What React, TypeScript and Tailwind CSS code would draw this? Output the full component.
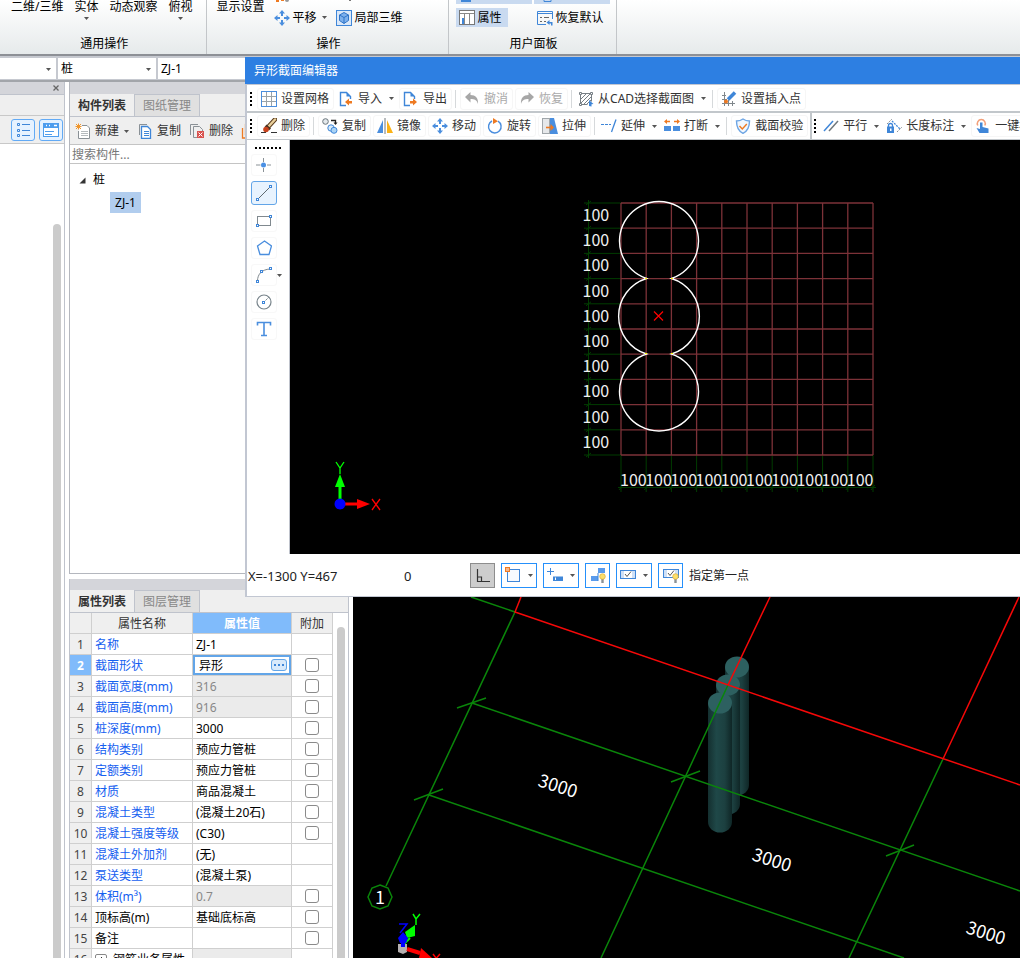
import type { ReactNode } from 'react';

type Children = { children?: ReactNode };

/* ---------- icons ---------- */

function Icon({ children }: Children) {
  return (
    <svg width="16" height="16" viewBox="0 0 16 16" fill="none" className="shrink-0" aria-hidden="true">
      {children}
    </svg>
  );
}

function Caret() {
  return (
    <svg width="5" height="3" viewBox="0 0 5 3" className="shrink-0" aria-hidden="true">
      <path d="M0 0h5L2.5 3z" fill="#555" />
    </svg>
  );
}

const PanIcon = () => (
  <Icon>
    <path d="M8 0l3 3.5H9V6H7V3.5H5zM8 16l3-3.5H9V10H7v2.500H5zM0 8l3.500-3v2H6v2H3.500v2zM16 8l-3.500-3v2H10v2h2.500v2z" fill="#4a8ede" />
  </Icon>
);

const CubeIcon = () => (
  <Icon>
    <rect x="0.5" y="0.5" width="15" height="15" fill="#dbe8f8" stroke="#3f86d8" />
    <path d="M8 2.5l4.5 2.500v5.500L8 13.500l-4.500-3V5z" fill="#7db0ec" stroke="#2f74c8" />
    <path d="M3.500 5L8 7.500 12.500 5M8 7.500v6" stroke="#2f74c8" />
  </Icon>
);

const PropsIcon = () => (
  <Icon>
    <rect x="0.5" y="0.5" width="15" height="14" fill="#fff" stroke="#777" />
    <path d="M1 3.500h14M5.500 4v10M10.500 4v10" stroke="#888" />
    <rect x="3" y="8" width="2" height="6" fill="#3f86d8" />
  </Icon>
);

const ResetIcon = () => (
  <Icon>
    <path d="M9 14.500H0.500v-13h15V9" stroke="#3f86d8" />
    <path d="M1 3.500h14" stroke="#3f86d8" />
    <path d="M3 7.500h2M7 7.500h5M3 11.500h2M7 11.500h2" stroke="#666" />
    <path d="M9.500 12.500l3-2.500v2h3v3.500h-1.500V13.500h-1.500v1.500z" fill="#3f86d8" />
  </Icon>
);

const GridIcon = () => (
  <Icon>
    <path d="M5.500 1v14M10.500 1v14M1 5.500h14M1 10.500h14" stroke="#9aa3a8" />
    <rect x="0.5" y="0.5" width="15" height="15" stroke="#4a8ede" />
  </Icon>
);

const ImportIcon = () => (
  <Icon>
    <path d="M8 14.500H2.500v-13h6l4 4V8" stroke="#3f86d8" strokeWidth="1.4" />
    <path d="M8.500 1.500v4h4" fill="#3f86d8" />
    <path d="M7 11l4-3.500V10h3v2.500h-3v2z" fill="#ee7a22" />
  </Icon>
);

const ExportIcon = () => (
  <Icon>
    <path d="M7 14.500H1.500v-13h6l4 4V8" stroke="#3f86d8" strokeWidth="1.4" />
    <path d="M7.500 1.500v4h4" fill="#3f86d8" />
    <path d="M14 11l-4-3.500V10H7v2.500h3v2z" fill="#ee7a22" />
  </Icon>
);

const UndoIcon = () => (
  <Icon>
    <path d="M1 6l5.500-5v3c5 0 8 3 7.500 9-1-4-3.500-5-7.500-5v3.500z" fill="#a7a7a7" />
  </Icon>
);

const RedoIcon = () => (
  <Icon>
    <path d="M15 6L9.500 1v3c-5 0-8 3-7.500 9 1-4 3.500-5 7.500-5v3.500z" fill="#a7a7a7" />
  </Icon>
);

const HatchIcon = () => (
  <Icon>
    <path d="M2.500 2.500h11v8M2.500 2.500v11h7" stroke="#777f85" />
    <path d="M3 8l5-5M3 12l9-9M5 14l8-8M9 13l4-4" stroke="#777f85" />
    <path d="M1.500 1.500h2v2h-2zM12.500 1.500h2v2h-2zM1.500 12.500h2v2h-2z" fill="#fff" stroke="#777f85" />
    <path d="M11 9l4.500 4-2 .2V15.500L11 15z" fill="#3f86d8" />
  </Icon>
);

const InsertPointIcon = () => (
  <Icon>
    <path d="M3.500 1v14M1 12.500h13M7.500 9v6M11.500 10v5M1 8.500h5M1 4.500h4" stroke="#80878c" />
    <path d="M14 1.500l-7 7" stroke="#3f86d8" strokeWidth="3.500" />
    <circle cx="5" cy="10.5" r="2" fill="#ee7a22" />
  </Icon>
);

const BrushIcon = () => (
  <Icon>
    <path d="M0 14.500h5M10 14.500h6" stroke="#333" />
    <path d="M8 8l6-6.500" stroke="#5b3d1e" strokeWidth="4.5" strokeLinecap="round" />
    <path d="M8 8l6-6.500" stroke="#e9cf9a" strokeWidth="2.5" strokeLinecap="round" />
    <path d="M5.500 6.500l4.500 4-2 2-4.500-3.500z" fill="#4a3220" />
    <circle cx="5" cy="11.5" r="2.8" fill="#c8421c" />
  </Icon>
);

const CopyCirclesIcon = () => (
  <Icon>
    <circle cx="3.5" cy="3.5" r="2.8" fill="#e4e9ec" stroke="#69747b" />
    <path d="M9 2.500h4.500v3" stroke="#222" strokeWidth="1.3" />
    <path d="M11.500 4.500h4L13.500 7z" fill="#222" />
    <circle cx="9" cy="10" r="3.2" fill="#d6eaf8" stroke="#3f86d8" />
    <circle cx="12" cy="12.3" r="3" fill="#a9d3f5" stroke="#3f86d8" />
  </Icon>
);

const MirrorIcon = () => (
  <Icon>
    <path d="M6 2v13H0z" fill="#4a8ede" />
    <path d="M10 2v13h6z" fill="#fbb216" />
    <path d="M8 0v16" stroke="#70787d" />
  </Icon>
);

const RotateIcon = () => (
  <Icon>
    <path d="M5 3a6.300 6.300 0 1 0 6 .2" stroke="#4a8ede" strokeWidth="1.4" />
    <path d="M6 0l5 3.200L6 6z" fill="#ee7a22" />
  </Icon>
);

const StretchIcon = () => (
  <Icon>
    <rect x="0.5" y="0.5" width="7" height="15" fill="#e6e8ea" stroke="#a0a6aa" />
    <path d="M8 0h4l4 16H8z" fill="#4a8ede" />
    <path d="M4 9.500h6" stroke="#ee7a22" strokeWidth="1.6" />
    <path d="M8.500 6l3.500 3.500L8.500 13z" fill="#ee7a22" />
  </Icon>
);

const ExtendIcon = () => (
  <Icon>
    <path d="M0 6.500h10" stroke="#3f86d8" strokeDasharray="3 1" />
    <path d="M15 1.500L10.500 14" stroke="#3f86d8" strokeWidth="1.3" />
  </Icon>
);

const BreakIcon = () => (
  <Icon>
    <path d="M0 3.500L3 1v5zM16 3.500L13 1v5z" fill="#ee7a22" />
    <path d="M2 3.500h4M10 3.500h4" stroke="#ee7a22" strokeWidth="1.3" />
    <path d="M0 8h7v5H0zM9 8h7v5H9z" fill="#4a8ede" />
  </Icon>
);

const ShieldIcon = () => (
  <Icon>
    <path d="M8 1c2 1.500 4 2 6.500 2 0 6-1.500 10-6.500 12.300C3 13 1.500 9 1.500 3 4 3 6 2.500 8 1z" fill="#f1f7fe" stroke="#6da5e4" strokeWidth="1.4" />
    <path d="M4.500 8l2.800 3 4.500-5" stroke="#ee7a22" strokeWidth="1.4" />
  </Icon>
);

const ParallelIcon = () => (
  <Icon>
    <path d="M1 13L10 3" stroke="#3f86d8" strokeWidth="1.5" />
    <path d="M6 13l9-10" stroke="#70787d" strokeWidth="1.5" />
  </Icon>
);

const LengthIcon = () => (
  <Icon>
    <path d="M1 6L6 1M11 14l5-5" stroke="#8a9196" strokeDasharray="2 1" />
    <path d="M6 3l8 8" stroke="#3f86d8" strokeDasharray="2 1" strokeWidth="1.3" />
    <path d="M2.500 9V7.500a1.500 1.500 0 0 1 4 0V9" stroke="#3f86d8" strokeWidth="1.3" />
    <rect x="1" y="8.5" width="7" height="6.5" fill="#3f86d8" />
    <rect x="4" y="10.5" width="1.5" height="2.5" fill="#fff" />
  </Icon>
);

const TouchIcon = () => (
  <Icon>
    <path d="M2.800 7.500a4 4 0 1 1 7 0" stroke="#f2a07a" strokeWidth="1.5" />
    <path d="M5 4.500h2.500V9l6 1.500V15H4.500l-3-5L5 11z" fill="#3f86d8" />
  </Icon>
);

const NewDocIcon = () => (
  <Icon>
    <path d="M7 2.500h5l2.500 2.500v10.500h-11V8" fill="#fff" stroke="#8a9196" />
    <path d="M6 8.500h7M6 10.500h7M6 12.500h7" stroke="#b5babd" />
    <path d="M3.500 0.500v6M0.500 3.500h6M1 1l5 5M6 1L1 6" stroke="#f0952b" />
  </Icon>
);

const CopyDocIcon = () => (
  <Icon>
    <path d="M2.500 12V1.500H10" stroke="#8a9196" />
    <path d="M4.500 3.500h6l3 3v9h-9z" fill="#fff" stroke="#3f86d8" strokeWidth="1.3" />
    <path d="M7 8.500h5M7 10.500h5M7 12.500h5" stroke="#3f86d8" />
  </Icon>
);

const DeleteDocIcon = () => (
  <Icon>
    <path d="M1.500 12V1.500H9" stroke="#8a9196" />
    <path d="M8 14.500H4.500v-11h6l3 3V8" stroke="#8a9196" />
    <rect x="8" y="8" width="7" height="7" fill="#d9534f" />
    <path d="M9.500 9.500l4 4M13.500 9.500l-4 4" stroke="#fff" />
  </Icon>
);

const LayersIcon = () => (
  <Icon>
    <path d="M1.500 5v10H12" stroke="#ee7a22" strokeWidth="1.3" />
    <rect x="4.5" y="1.5" width="10" height="10" stroke="#ee7a22" strokeWidth="1.3" />
  </Icon>
);

const ListViewIcon = () => (
  <Icon>
    <path d="M2.500 1.500h2v2h-2zM2.500 7.500h2v2h-2zM2.500 12.500h2v2h-2z" stroke="#3f86d8" />
    <path d="M7 2.500h8M7 8.500h8M7 13.500h8" stroke="#3f86d8" />
  </Icon>
);

const CardViewIcon = () => (
  <Icon>
    <rect x="0.5" y="1.5" width="15" height="13" fill="#fff" stroke="#4e9dee" />
    <path d="M0 1h16v5H0z" fill="#4e9dee" />
    <path d="M3 3.500h1M6 3.500h1M11 3.500h3" stroke="#fff" strokeWidth="1.5" />
    <path d="M2 9.500h9M2 12.500h7" stroke="#4e9dee" />
  </Icon>
);

const PointIcon = () => (
  <Icon>
    <path d="M7.500 1v4M7.500 11v4M0 8h4.500M11 8h4" stroke="#8a9196" />
    <circle cx="7.5" cy="8" r="2.5" fill="#4a90e4" />
  </Icon>
);

const Handle = ({ x, y }: { x: number; y: number }) => (
  <rect x={x - 1} y={y - 1} width="2" height="2" fill="#fff" stroke="#3f86d8" />
);

const LineIcon = () => (
  <Icon>
    <path d="M2 14L14 2" stroke="#5f6a70" />
    <Handle x={1.5} y={14.5} />
    <Handle x={14.5} y={1.5} />
  </Icon>
);

const RectIcon = () => (
  <Icon>
    <rect x="1.5" y="3.5" width="13" height="9" stroke="#80898f" />
    <Handle x={1.5} y={12.5} />
    <Handle x={14.5} y={3.5} />
  </Icon>
);

const PentagonIcon = () => (
  <Icon>
    <path d="M8.500 1l7 5-2.500 8.500H4L1.500 6z" stroke="#4a8ede" strokeWidth="1.3" />
  </Icon>
);

const ArcIcon = () => (
  <Icon>
    <path d="M1.500 14C1.500 7 6 2.500 14 2" stroke="#80898f" />
    <Handle x={1.5} y={14.5} />
    <Handle x={5.5} y={4.5} />
    <Handle x={14.5} y={1.5} />
  </Icon>
);

const CircleIcon = () => (
  <Icon>
    <circle cx="8" cy="8" r="7" stroke="#77838a" strokeWidth="1.2" />
    <path d="M8 8l5-5" stroke="#77838a" strokeDasharray="2 1" />
    <Handle x={7.5} y={8.5} />
  </Icon>
);

const TextIcon = () => (
  <Icon>
    <path d="M1.500 4.500V1.500h13v3M8 1.500v13M5 14.500h6" stroke="#4a8ede" strokeWidth="1.6" />
  </Icon>
);

const OrthoIcon = () => (
  <Icon>
    <path d="M2.500 2v12.500H15M2.500 10h4v4.500" stroke="#333" strokeWidth="1.2" />
  </Icon>
);

const SquareIcon = () => (
  <Icon>
    <rect x="2.5" y="2.5" width="12" height="12" fill="#f7faff" stroke="#3f86d8" />
    <rect x="0.5" y="0.5" width="4" height="4" fill="#f6b58c" stroke="#ee7a22" />
  </Icon>
);

const DynInputIcon = () => (
  <Icon>
    <path d="M3.500 1v7M0 4.500h7" stroke="#3f86d8" />
    <rect x="6" y="9.5" width="10" height="4.5" fill="#3f86d8" />
    <path d="M8.500 10.500v2.500" stroke="#fff" />
  </Icon>
);

const Bulb = () => (
  <>
    <path d="M12.500 12v4" stroke="#8a9196" strokeWidth="2.4" />
    <circle cx="12.5" cy="9.5" r="2.8" fill="#fbdf6d" stroke="#d9a427" strokeWidth="0.6" />
  </>
);

const BlocksIcon = () => (
  <Icon>
    <path d="M8 1h7v5H8zM1 9h7v5H1z" fill="#5a9bec" />
    <path d="M8 6v8" stroke="#3f86d8" />
    <Bulb />
  </Icon>
);

const CheckBoxIcon = () => (
  <Icon>
    <rect x="0.5" y="3.5" width="15" height="8" fill="#cfe0f6" stroke="#3f86d8" />
    <rect x="4" y="4" width="8" height="7" fill="#fff" />
    <path d="M5 7l2 2.500 4-5" stroke="#555" />
  </Icon>
);

const CheckBulbIcon = () => (
  <Icon>
    <rect x="0.5" y="2.5" width="15" height="8" fill="#cfe0f6" stroke="#3f86d8" />
    <rect x="4" y="3" width="8" height="7" fill="#fff" />
    <path d="M5 6l2 2.500 4-5" stroke="#555" />
    <Bulb />
  </Icon>
);

/* ---------- ribbon ---------- */

function RibbonGroup({ title, children }: { title: string } & Children) {
  return (
    <section className="flex flex-col border-r border-[#c3c6c9]">
      <div className="flex h-[30px] items-start">{children}</div>
      <h2 className="pl-[3px] pt-[6px] text-center leading-4">{title}</h2>
    </section>
  );
}

function Ribbon() {
  return (
    <header className="flex h-[54px] shrink-0 overflow-hidden bg-linear-to-b from-white to-[#e6eaeb]">
      <RibbonGroup title="通用操作">
        <div className="flex items-start gap-[11px] pl-[11px] pr-[13px] leading-[14px]">
          <button>二维/三维</button>
          <button className="flex flex-col items-center gap-[3px]">实体<Caret /></button>
          <button>动态观察</button>
          <button className="flex flex-col items-center gap-[3px]">俯视<Caret /></button>
        </div>
      </RibbonGroup>
      <RibbonGroup title="操作">
        <button className="pl-[10px] pr-[9px] leading-[14px]">显示设置</button>
        <div className="pr-[45px]">
          <svg width="80" height="8" viewBox="0 0 80 8" className="block" aria-hidden="true">
            <path d="M2 0h3v2H2zM7 0h3v1H7z" fill="#ee7a22" />
            <circle cx="13" cy="0" r="2" fill="#999" />
            <path d="M75 0h2v1h-2z" fill="#777" />
          </svg>
          <div className="flex h-[19px] items-center">
            <button className="flex items-center gap-[3px]"><PanIcon />平移</button>
            <span className="pl-[5px] pr-[9px]"><Caret /></span>
            <button className="flex items-center gap-[3px]"><CubeIcon />局部三维</button>
          </div>
        </div>
      </RibbonGroup>
      <RibbonGroup title="用户面板">
        <div className="grid grid-cols-2 gap-x-[2px] gap-y-1 pl-[7px] pr-[6px]">
          <div className="h-1 w-[76px] bg-[#c9daf0]"><svg width="76" height="4" className="block"><path d="M5 0h10v2H5z" fill="#3f86d8" /></svg></div>
          <div className="h-1 w-[76px] bg-[#c9daf0]"><svg width="76" height="4" className="block"><path d="M10 0v1.500h7V0" fill="none" stroke="#3f86d8" /></svg></div>
          <button className="flex h-[19px] w-[52px] items-center gap-[3px] bg-[#c9daf0] pl-[3px]"><PropsIcon />属性</button>
          <button className="flex h-[19px] items-center gap-[3px] pl-[3px]"><ResetIcon />恢复默认</button>
        </div>
      </RibbonGroup>
    </header>
  );
}

function Combo({ label, value, width }: { label: string; value: string; width: string }) {
  return (
    <div className={`relative bg-white ${width}`}>
      <select aria-label={label} className="h-full w-full appearance-none bg-white pl-[3px] outline-none">
        <option>{value}</option>
      </select>
      <span className="pointer-events-none absolute right-[5px] top-[10px]"><Caret /></span>
    </div>
  );
}

function SelectorRow() {
  return (
    <div className="flex h-7 shrink-0 gap-[2px] border-b-2 border-t-2 border-b-[#a2a5aa] border-t-[#8d9096] bg-[#c6c9d0] pb-[1px] pt-[2px]">
      <Combo label="楼层" value="" width="w-[56px]" />
      <Combo label="构件类型" value="桩" width="w-[98px]" />
      <Combo label="构件" value="ZJ-1" width="w-[190px]" />
    </div>
  );
}

/* ---------- left docks ---------- */

function NavDock() {
  return (
    <aside className="flex w-[65px] shrink-0 flex-col border-r border-[#bfc3cc]">
      <div className="flex h-[13px] items-center justify-end border-b border-[#bfc3cc] bg-[#d4d5da] pr-1">
        <button aria-label="关闭">
          <svg width="8" height="8" viewBox="0 0 8 8" className="block"><path d="M1.500 1.500l5 5M6.500 1.500l-5 5" stroke="#666" strokeWidth="1.3" /></svg>
        </button>
      </div>
      <div className="h-[21px] border-b border-[#c8c8c8] bg-[#efefef]" />
      <div className="flex h-7 items-center justify-end gap-1 border-b border-[#c8c8c8] bg-[#efefef] pr-[1px]">
        <button aria-label="列表视图" className="flex h-[22px] w-6 items-center justify-center rounded-[3px] border border-[#62aaf5] bg-[#e6f2ff]"><ListViewIcon /></button>
        <button aria-label="卡片视图" className="flex h-[22px] w-6 items-center justify-center rounded-[3px] border border-[#62aaf5] bg-[#e6f2ff]"><CardViewIcon /></button>
      </div>
      <div className="flex flex-1 justify-end bg-white pr-[3px] pt-20">
        <div className="w-2 rounded-t-full bg-[#cbcbcb]" />
      </div>
    </aside>
  );
}

function Tabs({ items }: { items: string[] }) {
  return (
    <div role="tablist" className="flex h-[23px] shrink-0 border-b border-[#bfc3cc] bg-[#efefef]">
      {items.map((item, i) => (
        <button
          key={item}
          role="tab"
          aria-selected={i === 0}
          className={i === 0 ? 'w-[65px] border-r border-[#bfc3cc] pt-[2px] font-bold text-[#333]' : 'w-[65px] border-r border-t border-[#bfc3cc] bg-[#e0e0e0] pt-[1px] text-[#888]'}
        >
          {item}
        </button>
      ))}
    </div>
  );
}

function ComponentDock() {
  return (
    <section className="flex h-[492px] shrink-0 flex-col border border-t-0 border-[#b4b7be] bg-white">
      <div className="h-[12px] shrink-0 bg-[#d4d5da]" />
      <Tabs items={['构件列表', '图纸管理']} />
      <div className="flex h-7 shrink-0 items-center gap-2 border-b border-[#c4c4c4] bg-[#efefef] pl-[5px] pt-[1px] text-[#333]">
        <button className="flex items-center gap-1"><NewDocIcon />新建<span className="pl-[1px]"><Caret /></span></button>
        <button className="flex items-center gap-1"><CopyDocIcon />复制</button>
        <button className="flex items-center gap-1"><DeleteDocIcon />删除</button>
        <button aria-label="层间复制"><LayersIcon /></button>
      </div>
      <input
        aria-label="搜索构件"
        placeholder="搜索构件..."
        className="h-[19px] shrink-0 border-b border-[#c4c4c4] px-[2px] outline-none placeholder:text-[#777]"
      />
      <ul className="pl-2 pt-1">
        <li>
          <div className="flex h-6 items-center gap-[7px]">
            <svg width="7" height="7" viewBox="0 0 7 7" className="ml-[1px]"><path d="M6.500 0.500v6h-6z" fill="#333" /></svg>
            桩
          </div>
          <ul className="pl-8">
            <li className="flex h-[21px] items-center"><button className="h-full w-[31px] bg-[#b1cdee]">ZJ-1</button></li>
          </ul>
        </li>
      </ul>
    </section>
  );
}

type Row = { name: string; value: string; black?: boolean; disabled?: boolean; check?: boolean };

const rows: Row[] = [
  { name: '名称', value: 'ZJ-1' },
  { name: '截面形状', value: '异形', check: true },
  { name: '截面宽度(mm)', value: '316', disabled: true, check: true },
  { name: '截面高度(mm)', value: '916', disabled: true, check: true },
  { name: '桩深度(mm)', value: '3000', check: true },
  { name: '结构类别', value: '预应力管桩', check: true },
  { name: '定额类别', value: '预应力管桩', check: true },
  { name: '材质', value: '商品混凝土', check: true },
  { name: '混凝土类型', value: '(混凝土20石)', check: true },
  { name: '混凝土强度等级', value: '(C30)', check: true },
  { name: '混凝土外加剂', value: '(无)' },
  { name: '泵送类型', value: '(混凝土泵)' },
  { name: '体积(m³)', value: '0.7', disabled: true, check: true },
  { name: '顶标高(m)', value: '基础底标高', black: true, check: true },
  { name: '备注', value: '', black: true, check: true },
];

const cell = 'h-[21px] border-b border-r border-[#cfcfcf]';
const textCell = `${cell} pb-0 pt-[2px] leading-4`;

function PropertyTable() {
  return (
    <table className="w-[263px] shrink-0 table-fixed border-separate border-spacing-0 self-start text-left">
      <colgroup>
        <col className="w-[22px]" />
        <col className="w-[101px]" />
        <col className="w-[99px]" />
        <col className="w-[41px]" />
      </colgroup>
      <thead>
        <tr className="bg-[#efefef] text-[#333]">
          <th className={`${textCell} px-0`} />
          <th className={`${textCell} px-0 text-center font-normal`}>属性名称</th>
          <th className={`${textCell} bg-[#80bbfb] px-0 text-center font-bold text-white`}>属性值</th>
          <th className={`${textCell} px-0 text-center font-normal`}>附加</th>
        </tr>
      </thead>
      <tbody>
        {rows.map((row, i) => (
          <tr key={row.name}>
            <td className={i === 1 ? `${textCell} bg-[#80bbfb] px-0 text-center font-bold text-white` : `${textCell} bg-[#efefef] px-0 text-center text-[#444]`}>{i + 1}</td>
            <td className={`${textCell} pl-[3px] pr-0 ${row.black ? 'text-black' : 'text-[#1560f0]'}`}>{row.name}</td>
            {i === 1 ? (
              <td className={`${cell} bg-white p-0`}>
                <div className="flex h-5 items-center justify-between border-2 border-[#62a5e8] pl-1 pr-[2px]">
                  <span className="pt-[1px] leading-[15px]">{row.value}</span>
                  <button aria-label="选择截面" className="flex h-3 w-4 items-center justify-center gap-[2px] rounded-[3px] border border-[#62a5e8] bg-[#d9eafb]">
                    <i className="size-[2px] bg-[#3f86d8]" />
                    <i className="size-[2px] bg-[#3f86d8]" />
                    <i className="size-[2px] bg-[#3f86d8]" />
                  </button>
                </div>
              </td>
            ) : (
              <td className={`${textCell} pl-[3px] pr-0 ${row.disabled ? 'bg-[#ebebeb] text-[#888]' : 'bg-white'}`}>{row.value}</td>
            )}
            <td className={`${cell} bg-white p-0`}>
              {row.check && (
                <input type="checkbox" aria-label={`附加 ${row.name}`} className="mx-auto block size-[14px] appearance-none rounded-[3px] border border-[#8a8a8a] bg-white" />
              )}
            </td>
          </tr>
        ))}
        <tr>
          <td className={`${textCell} bg-[#efefef] px-0 text-center text-[#444]`}>16</td>
          <td className={`${textCell} pl-[3px] pr-0`}>
            <div className="flex items-center gap-[6px]">
              <button aria-label="展开" className="flex size-3 items-center justify-center rounded-[2px] border border-[#888]">
                <svg width="7" height="7" viewBox="0 0 7 7"><path d="M3.500 0v7M0 3.500h7" stroke="#333" /></svg>
              </button>
              钢筋业务属性
            </div>
          </td>
          <td className={`${cell} bg-[#ebebeb] p-0`} />
          <td className={`${cell} bg-white p-0`} />
        </tr>
      </tbody>
    </table>
  );
}

function PropertyDock() {
  return (
    <section className="mt-[5px] flex min-h-0 flex-1 flex-col overflow-hidden border-x border-[#bfc3cc] bg-white">
      <div className="h-[11px] shrink-0 bg-[#d4d5da]" />
      <Tabs items={['属性列表', '图层管理']} />
      <div className="flex min-h-0 flex-1 overflow-hidden">
        <PropertyTable />
        <div className="flex flex-1 justify-center pt-[14px]">
          <div className="w-2 rounded-t-full bg-[#cbcbcb]" />
        </div>
      </div>
    </section>
  );
}

/* ---------- 3D viewport ---------- */

const piles = [
  { x: 737, top: 667, bottom: 785 },
  { x: 728, top: 685, bottom: 804 },
  { x: 720, top: 703, bottom: 822 },
];

function Viewport3D() {
  return (
    <main className="min-w-0 flex-1 overflow-hidden bg-black">
      <svg className="block h-full w-full font-['Noto_Sans_CJK_SC',sans-serif]">
        <defs>
          <linearGradient id="pile">
            <stop offset="0" stopColor="#142f2f" />
            <stop offset="0.35" stopColor="#1f4848" />
            <stop offset="0.7" stopColor="#1c4040" />
            <stop offset="1" stopColor="#0f2626" />
          </linearGradient>
        </defs>
        <g transform="translate(-353 -82)" fill="none" strokeWidth="1.5">
          {piles.map((p) => (
            <g key={p.x}>
              <path d={`M${p.x - 12} ${p.top}V${p.bottom}a12 10.500 0 0 0 24 0V${p.top}z`} fill="url(#pile)" />
              <ellipse cx={p.x} cy={p.top} rx="12" ry="10.5" fill="#2d6060" />
            </g>
          ))}
          <g stroke="#0a850a">
            <path d="M471 597L515 612L386 886" />
            <path d="M472 703L1020 891M429 795L904 958" />
            <path d="M728 685L601 958M943 759L849 958" />
            <path d="M457 708L486 698M414 800L443 789M671 782L700 771M886 856L914 845" />
            <path d="M380 885l8 3 4 9-4 9-8 3-8-3-4-9 4-9z" />
          </g>
          <g stroke="#f50808">
            <path d="M521 597L515 612L1020 785" />
            <path d="M770 597L728 685M1019 597L943 759" />
          </g>
          <g fill="#fff" fontSize="18" textAnchor="middle">
            <text transform="translate(556 792) rotate(18)">3000</text>
            <text transform="translate(770 866) rotate(18)">3000</text>
            <text transform="translate(984 939) rotate(18)">3000</text>
            <text x="380" y="904">1</text>
          </g>
          {/* axis gizmo */}
          <path d="M398 944h9v8l-4 2-5-2z" fill="#b5b0b0" />
          <path d="M404 944l6-6" stroke="#0f0" strokeWidth="2" />
          <path d="M415 925v11l-8 2-2-6z" fill="#0f0" />
          <path d="M403 947v-10" stroke="#00f" strokeWidth="4" />
          <path d="M403 932l5 6-2 5h-6l-2-5z" fill="#00f" />
          <path d="M407 949l13 4" stroke="#f00" strokeWidth="4" />
          <path d="M421 948l11 10h-13z" fill="#f00" />
          <path d="M413 914l3 5 4-5M416 919v6" stroke="#0f0" />
          <path d="M399 924h8l-7 9" stroke="#00f" />
          <path d="M433 954l6 8M440 954l-7 8" stroke="#f00" />
        </g>
      </svg>
    </main>
  );
}

/* ---------- section editor dialog ---------- */

type ToolProps = { icon: ReactNode; label: string; muted?: boolean; menu?: boolean };

function Tool({ icon, label, muted, menu }: ToolProps) {
  return (
    <button
      className={`flex h-[22px] shrink-0 items-center gap-1 whitespace-nowrap rounded-[3px] ${menu ? 'pl-[2px] pr-[3px]' : 'border border-[#f6f6f6] pl-[3px] pr-1'} ${muted ? 'text-[#aaa]' : 'text-[#333]'}`}
    >
      {icon}
      {label}
      {menu && <span className="pl-[3px]"><Caret /></span>}
    </button>
  );
}

const Divider = () => <span className="ml-[1px] mr-[2px] h-[18px] w-px shrink-0 bg-[#d6d9db]" />;

const Grip = () => (
  <span className="mr-[3px] h-[14px] w-[2px] shrink-0 bg-[repeating-linear-gradient(to_bottom,#000_0,#000_2px,transparent_2px,transparent_4px)]" />
);

const labels = Array.from({ length: 10 }, (_, i) => i);
const lines = Array.from({ length: 11 }, (_, i) => i);
const step = 25.2;

function SectionCanvas() {
  return (
    <div className="min-w-0 flex-1 bg-black">
      <svg className="block h-full w-full font-['Noto_Sans_CJK_SC',sans-serif]">
        <g transform="translate(-290 -140)" fill="none">
          <g stroke="#003c00">
            <path d="M588.500 200v258M618 487.500h258" />
            {lines.map((i) => (
              <path
                key={i}
                d={`M584 ${203 + i * step}H621M586 ${205 + i * step}l5-4M${621 + i * step} 455v37M${619 + i * step} 490l4-5`}
              />
            ))}
          </g>
          <g stroke="#7c3238" strokeWidth="1.3">
            {lines.map((i) => (
              <path key={i} d={`M621 ${203 + i * step}h252M${621 + i * step} 203v252`} />
            ))}
          </g>
          <path
            d="M646.500 278.500A39.500 39.500 0 1 1 671.500 278.500A39.500 39.500 0 0 1 671.500 354A39.500 39.500 0 1 1 646.500 354A39.500 39.500 0 0 1 646.500 278.500z"
            stroke="#fff"
            strokeWidth="1.4"
          />
          <path d="M645 278h2v1h-2zM671 278h2v1h-2zM645 353h2v1h-2zM671 353h2v1h-2z" fill="#ff0" />
          <path d="M654 311.500l9 9M663 311.500l-9 9" stroke="#f00" strokeWidth="1.2" />
          <g fill="#f0f0f0" fontSize="16">
            {labels.map((i) => (
              <text key={i} x="582.5" y={221 + i * step}>100</text>
            ))}
            {labels.map((i) => (
              <text key={i} x={620 + i * step} y="486">100</text>
            ))}
          </g>
          {/* UCS axes */}
          <path d="M340 504v-22" stroke="#0f0" strokeWidth="3" />
          <path d="M340 474l5 13h-10z" fill="#0f0" />
          <path d="M340 504h20" stroke="#f00" strokeWidth="3" />
          <path d="M370 504l-13-5v10z" fill="#f00" />
          <circle cx="340" cy="504" r="5.5" fill="#00f" />
          <path d="M336 462l4 6 4-6M340 468v6" stroke="#0f0" strokeWidth="1.3" />
          <path d="M372 499l8 11M380 499l-8 11" stroke="#f00" strokeWidth="1.3" />
        </g>
      </svg>
    </div>
  );
}

const palette = [
  { name: '点', icon: <PointIcon /> },
  { name: '直线', icon: <LineIcon />, active: true },
  { name: '矩形', icon: <RectIcon /> },
  { name: '多边形', icon: <PentagonIcon /> },
  { name: '弧', icon: <ArcIcon />, menu: true },
  { name: '圆', icon: <CircleIcon /> },
  { name: '文字', icon: <TextIcon /> },
];

function Palette() {
  return (
    <div className="flex w-[43px] shrink-0 flex-col gap-[5px] border-r border-[#bfc3cc] bg-white pl-1">
      <span className="ml-1 mt-[7px] h-[2px] w-[26px] bg-[repeating-linear-gradient(to_right,#000_0,#000_2px,transparent_2px,transparent_4px)]" />
      {palette.map((tool) => (
        <div key={tool.name} className="flex items-center">
          <button
            aria-label={tool.name}
            className={`flex w-[26px] items-center justify-center rounded-[3px] border ${tool.active ? 'h-6 border-[#62a5e8] bg-[#e8f3fe]' : 'h-[22px] border-[#f8f8f8]'}`}
          >
            {tool.icon}
          </button>
          {tool.menu && <Caret />}
        </div>
      ))}
    </div>
  );
}

function SnapButton({ label, icon, menu, pressed }: { label: string; icon: ReactNode; menu?: boolean; pressed?: boolean }) {
  return (
    <button
      aria-label={label}
      className={`flex h-[25px] shrink-0 items-center border ${menu ? 'w-9 justify-between px-[3px]' : 'w-[25px] justify-center'} ${pressed ? 'border-[#8d8d8d] bg-[#cdcdcd]' : 'border-[#2590fb] bg-white'}`}
    >
      {icon}
      {menu && <Caret />}
    </button>
  );
}

function SectionEditor() {
  return (
    <div role="dialog" aria-label="异形截面编辑器" className="absolute left-[245px] right-0 top-[57px] flex h-[540px] flex-col overflow-hidden">
      <h1 className="flex h-[27px] shrink-0 items-center bg-[#2d7fe2] pl-[9px] text-white">异形截面编辑器</h1>
      <div className="flex min-h-0 flex-1 flex-col border-b border-l-2 border-t border-[#c2c7d2] bg-white">
        <div className="flex h-7 shrink-0 items-center gap-[2px] border-b-2 border-[#c2c7cb] pl-[3px] pt-[1px]">
          <Grip />
          <Tool icon={<GridIcon />} label="设置网格" />
          <Tool icon={<ImportIcon />} label="导入" menu />
          <Tool icon={<ExportIcon />} label="导出" />
          <Divider />
          <Tool icon={<UndoIcon />} label="撤消" muted />
          <Tool icon={<RedoIcon />} label="恢复" muted />
          <Divider />
          <Tool icon={<HatchIcon />} label="从CAD选择截面图" menu />
          <Divider />
          <Tool icon={<InsertPointIcon />} label="设置插入点" />
        </div>
        <div className="flex h-[27px] shrink-0 items-center gap-[2px] border-b border-[#c2c7cb] pl-[3px]">
          <Grip />
          <Tool icon={<BrushIcon />} label="删除" />
          <Divider />
          <Tool icon={<CopyCirclesIcon />} label="复制" />
          <Tool icon={<MirrorIcon />} label="镜像" />
          <Tool icon={<PanIcon />} label="移动" />
          <Tool icon={<RotateIcon />} label="旋转" />
          <Tool icon={<StretchIcon />} label="拉伸" />
          <Divider />
          <Tool icon={<ExtendIcon />} label="延伸" menu />
          <Tool icon={<BreakIcon />} label="打断" menu />
          <Divider />
          <Tool icon={<ShieldIcon />} label="截面校验" />
          <span className="h-full w-[2px] shrink-0 bg-[#c2c7cb]" />
          <Grip />
          <Tool icon={<ParallelIcon />} label="平行" menu />
          <Tool icon={<LengthIcon />} label="长度标注" menu />
          <Tool icon={<TouchIcon />} label="一键标注" />
        </div>
        <div className="flex min-h-0 flex-1">
          <Palette />
          <SectionCanvas />
        </div>
        <div className="flex h-[42px] shrink-0 items-center gap-[6px] pl-[1px] text-[#222]">
          <span className="w-[150px] shrink-0 pt-[1px] text-[13px] leading-4">X=-1300 Y=467</span>
          <span className="w-[60px] shrink-0 pt-[1px] text-[13px] leading-4">0</span>
          <SnapButton label="正交" icon={<OrthoIcon />} pressed />
          <SnapButton label="捕捉" icon={<SquareIcon />} menu />
          <SnapButton label="动态输入" icon={<DynInputIcon />} menu />
          <SnapButton label="图元提示" icon={<BlocksIcon />} />
          <SnapButton label="选择过滤" icon={<CheckBoxIcon />} menu />
          <SnapButton label="选择提示" icon={<CheckBulbIcon />} />
          <span className="pt-[2px]">指定第一点</span>
        </div>
      </div>
    </div>
  );
}

export default function App() {
  return (
    <div className="relative flex h-screen flex-col overflow-hidden bg-white font-['Noto_Sans','Noto_Sans_CJK_SC',sans-serif] text-xs text-black">
      <Ribbon />
      <SelectorRow />
      <div className="flex min-h-0 flex-1">
        <NavDock />
        <div className="ml-1 mr-1 flex w-[280px] shrink-0 flex-col">
          <ComponentDock />
          <PropertyDock />
        </div>
        <Viewport3D />
      </div>
      <SectionEditor />
    </div>
  );
}
